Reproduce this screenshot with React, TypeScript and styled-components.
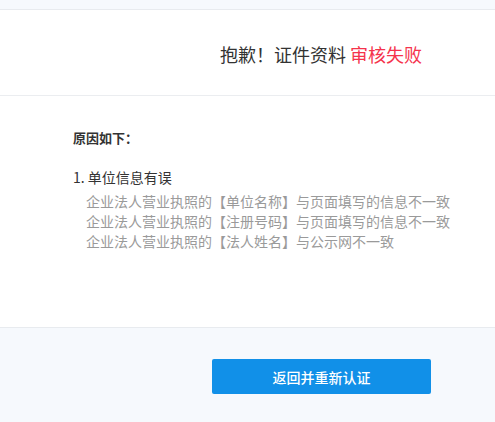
import styled, { createGlobalStyle } from "styled-components";

const GlobalStyle = createGlobalStyle`
  html, body {
    margin: 0;
    padding: 0;
    background: #f6f9fd;
    font-family: "Noto Sans CJK SC", "Noto Sans", sans-serif;
  }
`;

const Page = styled.div`
  width: 495px;
  height: 422px;
  display: flex;
  flex-direction: column;
  background: #f6f9fd;
  overflow: hidden;
`;
const TopStrip = styled.div`
  height: 9px;
  border-bottom: 1px solid #e8ebef;
`;
const Header = styled.header`
  height: 86px;
  background: #fff;
  border-bottom: 1px solid #ebedf0;
  display: flex;
  align-items: center;
  padding-left: 220px;
  padding-top: 2px;
  box-sizing: border-box;
`;
const Title = styled.h1`
  margin: 0;
  font-size: 18px;
  font-weight: 400;
  color: #333;
  line-height: 24px;
  white-space: nowrap;
`;
const Fail = styled.span`
  color: #f5334c;
`;
const Body = styled.section`
  height: 232px;
  background: #fff;
  border-bottom: 1px solid #e8ebef;
  padding: 32px 0 0 73px;
  box-sizing: border-box;
`;
const ReasonTitle = styled.h2`
  margin: 0 0 19px;
  font-size: 13px;
  font-weight: 700;
  color: #333;
  line-height: 20px;
`;
const ReasonItem = styled.div`
  margin-bottom: 4px;
`;
const ItemTitle = styled.div`
  font-size: 14px;
  color: #333;
  line-height: 20px;
  margin-bottom: 4px;
`;
const Detail = styled.div`
  font-size: 14px;
  color: #9a9a9a;
  line-height: 20px;
  padding-left: 13px;
  white-space: nowrap;
`;
const Footer = styled.footer`
  flex: 1;
  display: flex;
  align-items: flex-start;
  padding: 31px 0 0 212px;
`;
const Button = styled.button`
  width: 219px;
  height: 35px;
  border: none;
  border-radius: 2px;
  background: #1190e8;
  color: #fff;
  font-family: inherit;
  font-size: 14px;
  font-weight: 500;
  cursor: pointer;
`;

const reasons = [
  {
    title: "1. 单位信息有误",
    details: [
      "企业法人营业执照的【单位名称】与页面填写的信息不一致",
      "企业法人营业执照的【注册号码】与页面填写的信息不一致",
      "企业法人营业执照的【法人姓名】与公示网不一致",
    ],
  },
];

export default function App() {
  return (
    <Page>
      <GlobalStyle />
      <TopStrip />
      <Header>
        <Title>
          抱歉！证件资料 <Fail>审核失败</Fail>
        </Title>
      </Header>
      <Body>
        <ReasonTitle>原因如下：</ReasonTitle>
        {reasons.map((r) => (
          <ReasonItem key={r.title}>
            <ItemTitle>{r.title}</ItemTitle>
            {r.details.map((d) => (
              <Detail key={d}>{d}</Detail>
            ))}
          </ReasonItem>
        ))}
      </Body>
      <Footer>
        <Button>返回并重新认证</Button>
      </Footer>
    </Page>
  );
}
